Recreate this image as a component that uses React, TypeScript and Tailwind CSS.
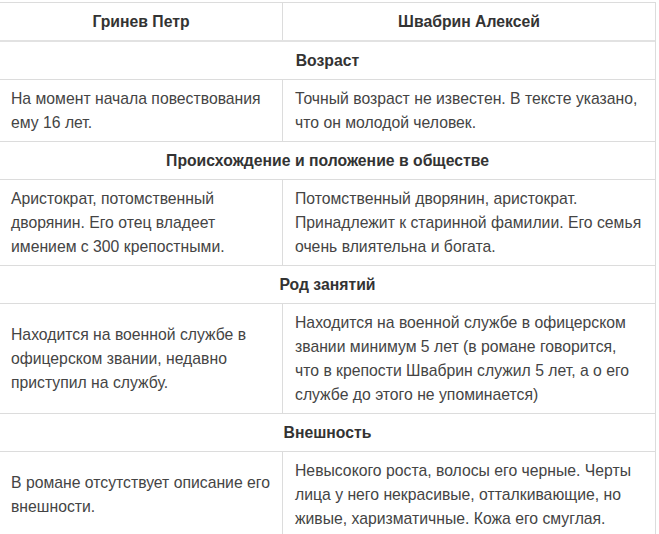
import React from "react";

type Row =
  | { kind: "section"; title: string }
  | { kind: "data"; left: string; right: string };

const rows: Row[] = [
  { kind: "section", title: "Возраст" },
  {
    kind: "data",
    left: "На момент начала повествования ему 16 лет.",
    right: "Точный возраст не известен. В тексте указано, что он молодой человек.",
  },
  { kind: "section", title: "Происхождение и положение в обществе" },
  {
    kind: "data",
    left: "Аристократ, потомственный дворянин. Его отец владеет имением с 300 крепостными.",
    right:
      "Потомственный дворянин, аристократ. Принадлежит к старинной фамилии. Его семья очень влиятельна и богата.",
  },
  { kind: "section", title: "Род занятий" },
  {
    kind: "data",
    left: "Находится на военной службе в офицерском звании, недавно приступил на службу.",
    right:
      "Находится на военной службе в офицерском звании минимум 5 лет (в романе говорится, что в крепости Швабрин служил 5 лет, а о его службе до этого не упоминается)",
  },
  { kind: "section", title: "Внешность" },
  {
    kind: "data",
    left: "В романе отсутствует описание его внешности.",
    right:
      "Невысокого роста, волосы его черные. Черты лица у него некрасивые, отталкивающие, но живые, харизматичные. Кожа его смуглая.",
  },
];

export default function App() {
  return (
    <div
      className="w-[659px] h-[534px] overflow-hidden bg-white pt-[2px]"
      style={{ fontFamily: '"Liberation Sans", Arial, sans-serif' }}
    >
      <div className="w-[656px] border-t border-r border-[#dcdcdc] text-[15.75px] leading-[24px] text-[#444]">
        <div className="flex border-b-2 border-[#e2e2e2]">
          <div className="w-[283px] shrink-0 border-r border-[#dcdcdc] pt-[7px] pb-[6px] text-center font-bold text-[#333]">
            Гринев Петр
          </div>
          <div className="flex-1 pt-[7px] pb-[6px] text-center font-bold text-[#333]">
            Швабрин Алексей
          </div>
        </div>
        {rows.map((r, i) =>
          r.kind === "section" ? (
            <div
              key={i}
              className="border-b border-[#dcdcdc] pt-[7px] pb-[6px] text-center font-bold text-[#333]"
            >
              {r.title}
            </div>
          ) : (
            <div key={i} className="flex border-b border-[#dcdcdc]">
              <div className="w-[283px] shrink-0 border-r border-[#dcdcdc] pl-[11px] pr-[10px] pt-[7px] pb-[6px] flex items-center">
                <div>{r.left}</div>
              </div>
              <div className="flex-1 pl-[12px] pr-[12px] pt-[7px] pb-[6px] flex items-center">
                <div>{r.right}</div>
              </div>
            </div>
          )
        )}
      </div>
    </div>
  );
}
